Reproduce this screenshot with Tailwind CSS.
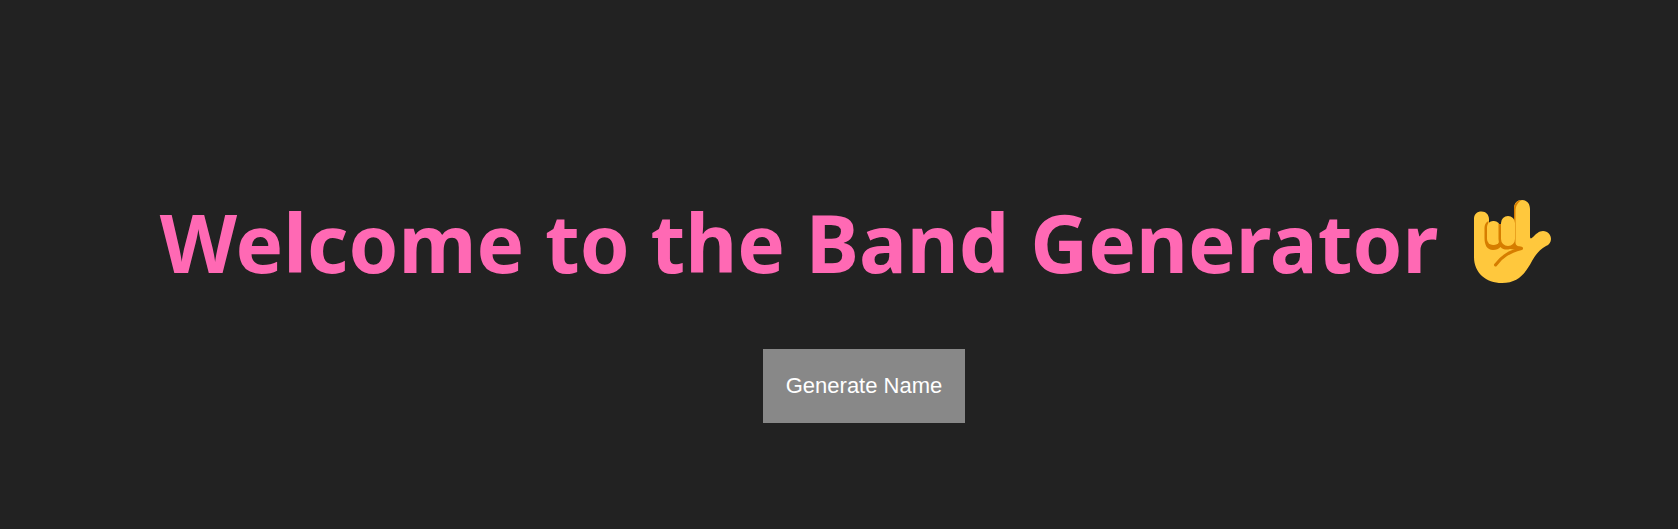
<!DOCTYPE html>
<html lang="en">
<head>
<meta charset="utf-8">
<meta name="viewport" content="width=device-width, initial-scale=1">
<title>Band Generator</title>
<script src="https://cdn.jsdelivr.net/npm/@tailwindcss/browser@4"></script>
</head>
<body class="min-h-screen bg-[#222222]">
<main class="flex flex-col items-center pt-[183px] pl-[50px]">
  <h1 class="flex items-center gap-9 pr-4 font-['Noto_Sans','Open_Sans',sans-serif] text-[80px] leading-[118px] font-bold whitespace-nowrap text-[#ff69b4]">
    Welcome to the Band Generator
    <svg class="h-[84px] w-[78px]" viewBox="0 0 78 84" role="img" aria-label="Love-you gesture">
      <path fill="#ffc83d" d="M0 19C0 14 3 11.500 7.500 11.500C12 11.500 15 15 15 19V30H40V9C40 3 43 0 48 0C53 0 56 4 56 9V36C56 39 57 39 59 37C62 34 65 31 69 31C74 31 77 35 77 39C77 42 75 45 72 46C66 49 62 54 58 61C51 74 44 83 28 83C12 83 0 73 0 57Z"/>
      <path fill="#d67d00" d="M14.500 21C11 23 10.500 25 10.500 30V38C10.500 45 13 50 19 50C22 50 25 49 26.500 47C29 50 33 50 36 49C41 50 45 50 48 49C49.500 48 48 46.500 46.500 46.500C44 46 42 46 41.500 43V11C41.500 6 44 2 48 0C43 0 40 4 40 9V20L34 30H17L14.500 27Z"/>
      <rect x="13" y="21" width="13" height="24" rx="6" fill="#ffc83d"/>
      <path d="M26 24V39C26 43 28 46 31 47" fill="none" stroke="#d67d00" stroke-width="3"/>
      <rect x="27" y="16" width="14" height="30" rx="7" fill="#ffc83d"/>
      <path d="M47.500 48.500C35 52 28 56 21.500 65" fill="none" stroke="#d67d00" stroke-width="3" stroke-linecap="round" stroke-linejoin="round"/>
    </svg>
  </h1>
  <button type="button" class="mt-12 bg-[#888888] px-[23px] py-[21px] font-['Liberation_Sans',Arial,sans-serif] text-[22px] leading-8 text-white">Generate Name</button>
</main>
</body>
</html>
